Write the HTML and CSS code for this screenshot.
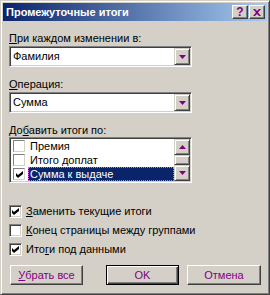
FILE: index.html
```html
<!DOCTYPE html>
<html lang="ru">

<head>
    <meta charset="UTF-8">
    <title>Промежуточные итоги</title>
    <link rel="stylesheet" href="styles.css">
</head>

<body>
    <div class="window">
        <div class="titlebar">
            <span class="title">Промежуточные итоги</span>
            <div class="caption-btns">
                <span class="cap-btn help">?</span>
                <span class="cap-btn close">
                    <svg width="8" height="7" viewBox="0 0 8 7"><path d="M0 0h2l2 2 2-2h2L5 3.5 8 7H6L4 5 2 7H0l3-3.5z" fill="#800080"/></svg>
                </span>
            </div>
        </div>

        <div class="content">
            <div class="label"><u>П</u>ри каждом изменении в:</div>
            <div class="combo">
                <span class="combo-text">Фамилия</span>
                <span class="drop-btn"><svg width="7" height="4" viewBox="0 0 7 4"><path d="M0 0h7L3.5 4z" fill="#800080"/></svg></span>
            </div>

            <div class="label"><u>О</u>перация:</div>
            <div class="combo">
                <span class="combo-text">Сумма</span>
                <span class="drop-btn"><svg width="7" height="4" viewBox="0 0 7 4"><path d="M0 0h7L3.5 4z" fill="#800080"/></svg></span>
            </div>

            <div class="label">До<u>б</u>авить итоги по:</div>
            <div class="listbox">
                <div class="list-items">
                    <div class="list-item">
                        <span class="lb-check"></span>
                        <span class="lb-text">Премия</span>
                    </div>
                    <div class="list-item">
                        <span class="lb-check"></span>
                        <span class="lb-text">Итого доплат</span>
                    </div>
                    <div class="list-item selected">
                        <span class="lb-check"><svg width="7" height="7" viewBox="0 0 7 7"><path d="M0 2l2 2 5-4v3L2 7 0 5z" fill="#000"/></svg></span>
                        <span class="lb-text">Сумма к выдаче</span>
                    </div>
                </div>
                <div class="scrollbar">
                    <span class="sb-btn"><svg width="7" height="4" viewBox="0 0 7 4"><path d="M0 4h7L3.5 0z" fill="#800080"/></svg></span>
                    <span class="sb-thumb"></span>
                    <span class="sb-btn"><svg width="7" height="4" viewBox="0 0 7 4"><path d="M0 0h7L3.5 4z" fill="#800080"/></svg></span>
                </div>
            </div>

            <div class="checks">
                <div class="check-row">
                    <span class="checkbox"><svg width="7" height="7" viewBox="0 0 7 7"><path d="M0 2l2 2 5-4v3L2 7 0 5z" fill="#000"/></svg></span>
                    <span><u>З</u>аменить текущие итоги</span>
                </div>
                <div class="check-row">
                    <span class="checkbox"></span>
                    <span><u>К</u>онец страницы между группами</span>
                </div>
                <div class="check-row">
                    <span class="checkbox"><svg width="7" height="7" viewBox="0 0 7 7"><path d="M0 2l2 2 5-4v3L2 7 0 5z" fill="#000"/></svg></span>
                    <span>Ито<u>г</u>и под данными</span>
                </div>
            </div>

            <div class="buttons">
                <span class="btn"><u>У</u>брать все</span>
                <span class="btn default">OK</span>
                <span class="btn">Отмена</span>
            </div>
        </div>
    </div>
</body>

</html>
```

FILE: styles.css
```css
* {
    margin: 0;
    padding: 0;
    box-sizing: border-box;
}

body {
    font-family: 'Liberation Sans', Arial, sans-serif;
    font-size: 11px;
    line-height: 13px;
    color: #000;
    background: #d4d0c8;
}

u {
    text-decoration: underline;
    text-underline-offset: 1px;
}

.window {
    width: 270px;
    height: 295px;
    background: #d4d0c8;
    border: 1px solid;
    border-color: #d4d0c8 #404040 #404040 #d4d0c8;
    box-shadow: inset 1px 1px #fff, inset -1px -1px #808080;
    padding: 2px;
}

.titlebar {
    height: 18px;
    display: flex;
    align-items: center;
    justify-content: space-between;
    padding-left: 3px;
    padding-right: 2px;
    background: linear-gradient(to right, #0a246a, #a6caf0);
}

.title {
    color: #fff;
    font-weight: bold;
}

.caption-btns {
    display: flex;
    gap: 1px;
}

.cap-btn {
    width: 16px;
    height: 14px;
    display: flex;
    align-items: center;
    justify-content: center;
    background: #d4d0c8;
    border: 1px solid;
    border-color: #fff #404040 #404040 #fff;
    box-shadow: inset -1px -1px #808080;
    color: #800080;
    font-weight: bold;
    font-size: 12px;
}

.content {
    padding: 0 6px;
}

.label {
    height: 13px;
    margin-top: 11px;
    white-space: nowrap;
}

.combo {
    width: 183px;
    height: 21px;
    margin-top: 1px;
    display: flex;
    background: #fff;
    border: 1px solid;
    border-color: #808080 #fff #fff #808080;
    box-shadow: inset 1px 1px #404040, inset -1px -1px #d4d0c8;
    padding: 1px;
}

.combo-text {
    flex: 1;
    padding-left: 2px;
    line-height: 17px;
}

.drop-btn,
.sb-btn {
    width: 16px;
    height: 17px;
    display: flex;
    align-items: center;
    justify-content: center;
    background: #d4d0c8;
    border: 1px solid;
    border-color: #d4d0c8 #404040 #404040 #d4d0c8;
    box-shadow: inset 1px 1px #fff, inset -1px -1px #808080;
}

.listbox {
    width: 183px;
    height: 46px;
    display: flex;
    background: #fff;
    border: 1px solid;
    border-color: #808080 #fff #fff #808080;
    box-shadow: inset 1px 1px #404040, inset -1px -1px #d4d0c8;
    padding: 1px;
}

.list-items {
    flex: 1;
}

.list-item {
    height: 14px;
    display: flex;
    align-items: center;
}

.lb-check {
    width: 12px;
    height: 12px;
    margin: 0 3px 0 2px;
    display: flex;
    align-items: center;
    justify-content: center;
    background: #fff;
    border: 1px solid;
    border-color: #808080 #d4d0c8 #d4d0c8 #808080;
}

.lb-text {
    flex: 1;
    height: 14px;
    line-height: 12px;
    padding-left: 1px;
    border: 1px solid transparent;
}

.selected .lb-text {
    background: #0a246a;
    color: #fff;
    border: 1px dotted #e060f0;
}

.scrollbar {
    width: 16px;
    display: flex;
    flex-direction: column;
}

.scrollbar .sb-btn {
    height: 16px;
}

.sb-thumb {
    height: 10px;
    background: #d4d0c8;
    border: 1px solid;
    border-color: #d4d0c8 #404040 #404040 #d4d0c8;
    box-shadow: inset 1px 1px #fff, inset -1px -1px #808080;
}

.checks {
    margin-top: 19px;
}

.check-row {
    height: 19px;
    display: flex;
    align-items: center;
    gap: 4px;
    white-space: nowrap;
}

.checkbox {
    width: 13px;
    height: 13px;
    display: flex;
    align-items: center;
    justify-content: center;
    background: #fff;
    border: 1px solid;
    border-color: #808080 #fff #fff #808080;
    box-shadow: inset 1px 1px #404040, inset -1px -1px #d4d0c8;
}

.buttons {
    margin-top: 6px;
    padding-left: 1px;
    display: flex;
}

.btn {
    width: 73px;
    height: 20px;
    display: flex;
    align-items: center;
    justify-content: center;
    background: #d4d0c8;
    color: #800080;
    border: 1px solid;
    border-color: #fff #404040 #404040 #fff;
    box-shadow: inset -1px -1px #808080;
}

.btn.default {
    margin-left: 23px;
    border-color: #000;
    box-shadow: inset 1px 1px #fff, inset -1px -1px #404040, inset -2px -2px #808080;
}

.btn:last-child {
    width: 74px;
    margin-left: 8px;
}
```
